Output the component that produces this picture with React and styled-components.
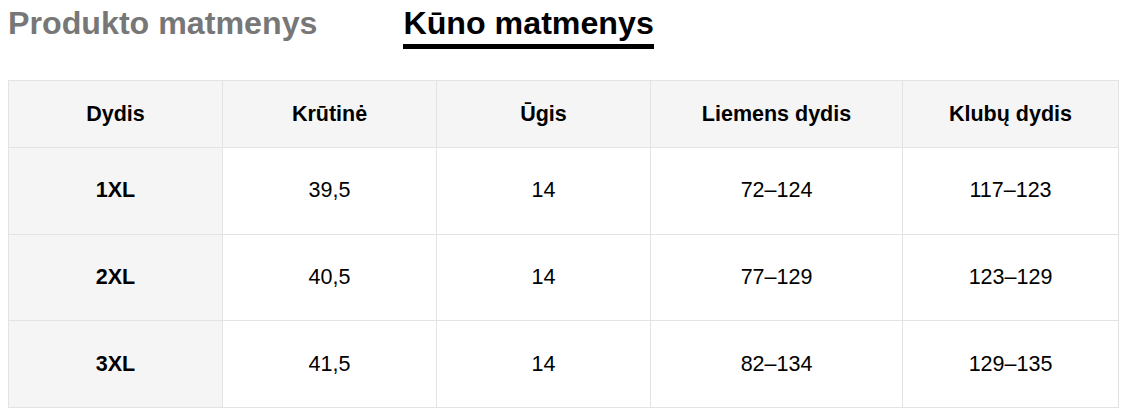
import React from 'react'
import styled, { createGlobalStyle } from 'styled-components'

const GlobalStyle = createGlobalStyle`
  body {
    margin: 8px;
    background: #fff;
    font-family: 'Liberation Sans', Arial, sans-serif;
    color: #000;
  }
`

const Tabs = styled.div`
  display: flex;
  gap: 86px;
  height: 72px;
`

const Tab = styled.div`
  font-size: 32.2px;
  font-weight: 700;
  line-height: 31px;
  color: ${p => (p.active ? '#000' : '#777')};
  height: 41px;
  box-sizing: border-box;
  border-bottom: ${p => (p.active ? '5px solid #000' : '5px solid transparent')};
  align-self: flex-start;
  white-space: nowrap;
`

const Table = styled.table`
  border-collapse: collapse;
  table-layout: fixed;
  width: 1110px;
`

const Th = styled.th`
  background: #f5f5f5;
  border: 1px solid #e3e3e3;
  height: 66px;
  font-size: 21.5px;
  font-weight: 700;
  text-align: center;
  padding: 0;
`

const Td = styled.td`
  background: ${p => (p.head ? '#f5f5f5' : '#fff')};
  border: 1px solid #e3e3e3;
  height: 85.7px;
  font-size: 21.5px;
  font-weight: ${p => (p.head ? 700 : 400)};
  text-align: center;
  padding: 0;
`

const columns = [
  { title: 'Dydis', width: 214 },
  { title: 'Krūtinė', width: 214 },
  { title: 'Ūgis', width: 214 },
  { title: 'Liemens dydis', width: 252 },
  { title: 'Klubų dydis', width: 216 },
]

const rows = [
  ['1XL', '39,5', '14', '72–124', '117–123'],
  ['2XL', '40,5', '14', '77–129', '123–129'],
  ['3XL', '41,5', '14', '82–134', '129–135'],
]

const App = () => {
  return (
    <>
      <GlobalStyle />
      <Tabs>
        <Tab>Produkto matmenys</Tab>
        <Tab active>Kūno matmenys</Tab>
      </Tabs>
      <Table>
        <colgroup>
          {columns.map(c => (
            <col key={c.title} style={{ width: c.width }} />
          ))}
        </colgroup>
        <thead>
          <tr>
            {columns.map(c => (
              <Th key={c.title}>{c.title}</Th>
            ))}
          </tr>
        </thead>
        <tbody>
          {rows.map(r => (
            <tr key={r[0]}>
              {r.map((v, i) => (
                <Td key={i} head={i === 0}>{v}</Td>
              ))}
            </tr>
          ))}
        </tbody>
      </Table>
    </>
  )
}

export default App
